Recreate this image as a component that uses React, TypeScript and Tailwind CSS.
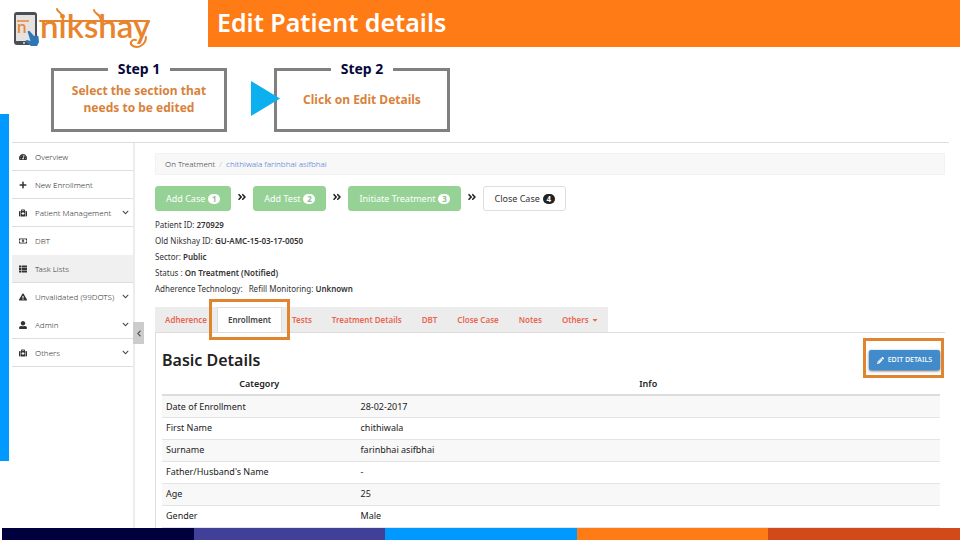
import React from "react";
import type { IconType } from "react-icons";
import {
    FaAngleDoubleRight,
    FaCaretDown,
    FaChevronDown,
    FaChevronLeft,
    FaExclamationTriangle,
    FaMedkit,
    FaPencilAlt,
    FaPlus,
    FaRegMoneyBillAlt,
    FaTachometerAlt,
    FaThList,
    FaUserAlt,
} from "react-icons/fa";

interface MenuItem {
    label: string;
    icon: IconType;
    expandable?: boolean;
    active?: boolean;
    noDivider?: boolean;
}

const menuItems: MenuItem[] = [
    { label: "Overview", icon: FaTachometerAlt },
    { label: "New Enrollment", icon: FaPlus },
    { label: "Patient Management", icon: FaMedkit, expandable: true },
    { label: "DBT", icon: FaRegMoneyBillAlt, noDivider: true },
    { label: "Task Lists", icon: FaThList, active: true },
    { label: "Unvalidated (99DOTS)", icon: FaExclamationTriangle, expandable: true, noDivider: true },
    { label: "Admin", icon: FaUserAlt, expandable: true },
    { label: "Others", icon: FaMedkit, expandable: true },
];

const stages = [
    { label: "Add Case", done: true },
    { label: "Add Test", done: true },
    { label: "Initiate Treatment", done: true },
    { label: "Close Case", done: false },
];

const tabs = ["Adherence", "Enrollment", "Tests", "Treatment Details", "DBT", "Close Case", "Notes", "Others"];

const details = [
    ["Date of Enrollment", "28-02-2017"],
    ["First Name", "chithiwala"],
    ["Surname", "farinbhai asifbhai"],
    ["Father/Husband's Name", "-"],
    ["Age", "25"],
    ["Gender", "Male"],
];

const Logo: React.FC = () => (
    <svg viewBox="0 0 140 44" className="w-[140px] h-11" role="img" aria-label="nikshay">
        {/* Phone */}
        <rect x="1" y="6" width="23" height="33" rx="3" fill="#4a4f57" />
        <rect x="3" y="9" width="19" height="26" fill="#e6e2df" />
        <circle cx="11" cy="37" r="1" fill="#e6e2df" />
        <path d="M4 15h12" stroke="#e8873a" strokeWidth="1.500" />
        <text x="4" y="27" fontSize="17" fontWeight="600" fontFamily="Lato, sans-serif" fill="#e8873a">n</text>
        {/* Pointing hand */}
        <path d="M15 27c-1-2 1-3 2-1.500l4 4.500c1-1 2-.5 2.500 0 1-.7 2 0 2 1l.5 5-2 4h-6l-5-4c-1-1.500.5-2.500 2-1.800l2.500.8z" fill="#2e75b6" />
        {/* Wordmark with its headline and flourishes */}
        <text x="27" y="32" fontSize="33" fontWeight="600" fontFamily="Lato, sans-serif" fill="#e8842c">nikshay</text>
        <g fill="none" stroke="#e8842c" strokeWidth="2" strokeLinecap="round">
            <path d="M27 15h109" />
            <path d="M44 3c0 3 6 3 6 11M81 4c0 4 7 4 7 10" />
            <path d="M123 34c-5-1-7 4-3 6 6 3 13-2 13-9" />
        </g>
    </svg>
);

const StepBox: React.FC<{ title: string; children: React.ReactNode }> = ({ title, children }) => (
    <fieldset className="w-44 h-[73px] border-[3px] border-[#808080] text-center text-xs leading-[17px] font-bold text-[#d9823b]">
        <legend className="mx-auto px-[10px] text-sm leading-5 text-[#08083a]">{title}</legend>
        <div className="h-10 flex items-center justify-center px-3">{children}</div>
    </fieldset>
);

const Sidebar: React.FC = () => (
    <nav className="relative w-[123px] shrink-0 border-r-2 border-[#ececec] text-[8px] font-light text-[#333]">
        {menuItems.map(({ label, icon: Icon, expandable, active, noDivider }) => (
            <a
                key={label}
                href="#"
                className={`h-7 flex items-center pl-[7px] pr-1 border-b ${noDivider ? "border-transparent" : "border-[#ddd]"} ${active ? "bg-[#f0f0f0]" : ""}`}
            >
                <Icon className="w-2 h-2 mr-2 text-[#333]" />
                <span className="flex-1 whitespace-nowrap">{label}</span>
                {expandable && <FaChevronDown className="w-[7px] h-[7px] text-[#444]" />}
            </a>
        ))}
        <button
            aria-label="Collapse menu"
            className="absolute left-full top-[179px] w-[11px] h-[22px] bg-[#ccc] flex items-center justify-center text-[#555]"
        >
            <FaChevronLeft className="w-[6px] h-[7px]" />
        </button>
    </nav>
);

const Stages: React.FC = () => (
    <div className="mt-[11px] flex items-center text-[9px]">
        {stages.map(({ label, done }, i) => (
            <React.Fragment key={label}>
                {i > 0 && <FaAngleDoubleRight className="w-[22px] h-[10px] -mt-1 text-[#222]" />}
                <button
                    className={`h-[25px] px-[10px] flex items-center gap-[3px] rounded-[3px] border whitespace-nowrap ${done ? "bg-[#96d296] border-[#96d296] text-white" : "bg-white border-[#ddd] text-[#333]"}`}
                >
                    {label}
                    <span className={`w-3 h-[10px] rounded-full text-[8px] leading-[10px] font-bold text-center ${done ? "bg-white text-[#8fbf8f]" : "bg-[#222] text-white"}`}>
                        {i + 1}
                    </span>
                </button>
            </React.Fragment>
        ))}
    </div>
);

const PatientInfo: React.FC = () => (
    <div className="mt-[6px] text-[8px] leading-4 text-[#333]">
        <p>Patient ID: <strong className="font-semibold">270929</strong></p>
        <p>Old Nikshay ID: <strong className="font-semibold">GU-AMC-15-03-17-0050</strong></p>
        <p>Sector: <strong className="font-semibold">Public</strong></p>
        <p>Status : <strong className="font-semibold">On Treatment (Notified)</strong></p>
        <p>
            <span className="mr-1">Adherence Technology:</span>
            {" "}Refill Monitoring: <strong className="font-semibold">Unknown</strong>
        </p>
    </div>
);

const Tabs: React.FC = () => (
    <div className="mt-[10px] border-b border-[#ddd]">
        <div role="tablist" className="w-fit h-[25px] flex bg-[#ececec] text-[8px] font-semibold text-[#ea6550]">
            {tabs.map((tab) => {
                const selected = tab === "Enrollment";
                return (
                    <div key={tab} className="relative flex">
                        <button
                            role="tab"
                            aria-selected={selected}
                            className={`px-[10px] flex items-center gap-[3px] whitespace-nowrap ${selected ? "bg-white border border-b-0 border-[#ddd] text-[#444]" : ""}`}
                        >
                            {tab}
                            {tab === "Others" && <FaCaretDown className="w-[6px] h-2" />}
                        </button>
                        {selected && <span className="absolute z-10 -left-2 -right-2 -top-2 -bottom-2 border-[3px] border-[#e0842f]" />}
                    </div>
                );
            })}
        </div>
    </div>
);

const BasicDetails: React.FC = () => (
    <section className="flex-1 border-l border-[#ddd] pl-[6px] pr-[5px]">
        <div className="pt-[15px] flex items-center justify-between">
            <h2 className="text-base leading-6 font-semibold text-[#222]">Basic Details</h2>
            <div className="relative">
                <button className="h-5 px-2 flex items-center gap-1 rounded-[2px] bg-[#428bca] text-[7px] font-medium text-white shadow-sm shadow-gray-500 whitespace-nowrap">
                    <FaPencilAlt className="w-[7px] h-[7px]" />
                    EDIT DETAILS
                </button>
                <span className="absolute -left-[6px] -right-1 -top-3 -bottom-2 border-[3px] border-[#e0842f]" />
            </div>
        </div>
        <table className="mt-px w-full text-[9px] text-[#222]">
            <thead>
                <tr className="h-[22px] border-b-2 border-[#ddd]">
                    <th className="w-1/4 font-semibold">Category</th>
                    <th className="font-semibold">Info</th>
                </tr>
            </thead>
            <tbody>
                {details.map(([category, info]) => (
                    <tr key={category} className="h-[22px] border-b border-[#e4e4e4] odd:bg-[#f8f8f8]">
                        <td className="px-1">{category}</td>
                        <td className="px-1">{info}</td>
                    </tr>
                ))}
            </tbody>
        </table>
    </section>
);

export default function App() {
    return (
        <div className="min-h-screen flex flex-col bg-white font-['Noto_Sans',sans-serif]">
            <header className="h-[47px] flex">
                <div className="w-52 shrink-0 pl-[13px] pt-[6px]">
                    <Logo />
                </div>
                <div className="flex-1 pl-[9px] pb-1 flex items-center bg-[#ff7b15]">
                    <h1 className="text-[25px] leading-8 font-semibold text-white">Edit Patient details</h1>
                </div>
            </header>

            <div className="flex-1 flex">
                <div className="w-[9px] shrink-0 mt-[67px] mb-[67px] bg-[#0099ff]" />
                <main className="flex-1 flex flex-col pl-[3px] pr-[11px]">
                    <div className="pt-3 pl-[39px] flex items-start">
                        <StepBox title="Step 1">Select the section that needs to be edited</StepBox>
                        <svg viewBox="0 0 29 35" className="relative w-[29px] h-[35px] mt-[22px] ml-6 -mr-[6px]">
                            <path d="M0 0L29 17.500L0 35z" fill="#0cb0ef" />
                        </svg>
                        <StepBox title="Step 2">Click on Edit Details</StepBox>
                    </div>

                    <div className="mt-[10px] flex-1 flex border-t border-[#ddd]">
                        <Sidebar />
                        <div className="flex-1 flex flex-col pl-5 pr-1 pt-[10px]">
                            <div className="h-[22px] px-[9px] flex items-center gap-1 bg-[#f8f8f8] border border-[#f2f2f2] text-[8px] font-light">
                                <span className="text-[#444]">On Treatment</span>
                                <span className="text-[#bbb]">/</span>
                                <a href="#" className="text-[#4a76d0]">chithiwala farinbhai asifbhai</a>
                            </div>
                            <Stages />
                            <PatientInfo />
                            <Tabs />
                            <BasicDetails />
                        </div>
                    </div>
                </main>
            </div>

            <footer className="h-3 pl-[2px] flex">
                <div className="flex-1 bg-[#00003f]" />
                <div className="flex-1 bg-[#404099]" />
                <div className="flex-1 bg-[#0099ff]" />
                <div className="flex-1 bg-[#ff7b15]" />
                <div className="flex-1 bg-[#d2491a]" />
            </footer>
        </div>
    );
}
